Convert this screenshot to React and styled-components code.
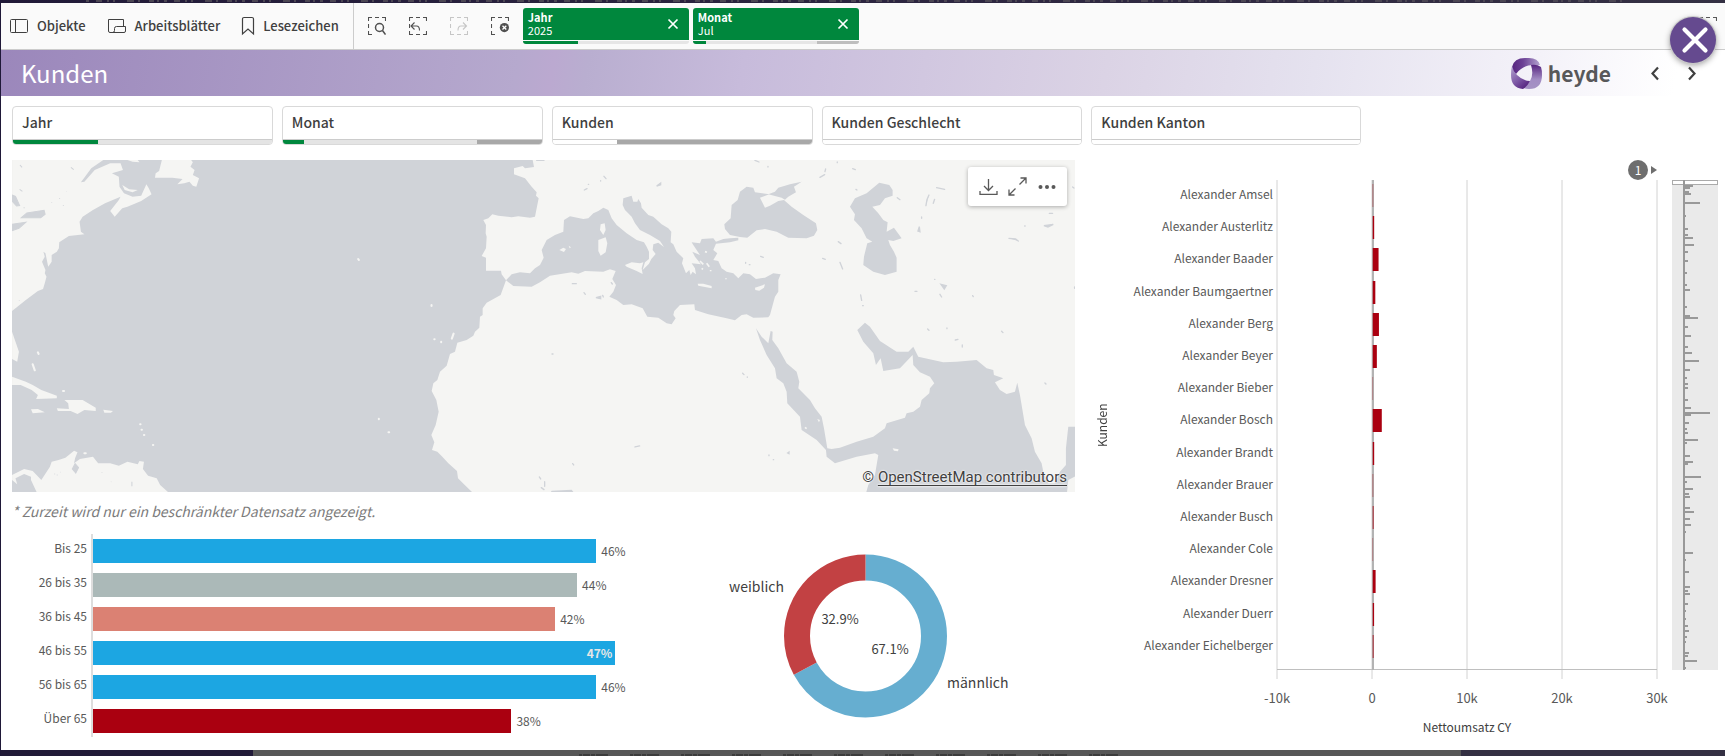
import React from 'react'
import styled, { createGlobalStyle } from 'styled-components'

const GlobalStyle = createGlobalStyle`
  * {
    box-sizing: border-box;
  }
  body {
    margin: 0;
    background: #fff;
    color: #404040;
    font-family: "Noto Sans CJK SC", "Open Sans", sans-serif;
    font-size: 13px;
    line-height: 16px;
  }
  button {
    font: inherit;
    color: inherit;
    background: none;
    border: 0;
    padding: 0;
    cursor: pointer;
  }
`

const Page = styled.div`
  position: relative;
  display: flex;
  flex-direction: column;
  min-height: 100vh;
  border-left: 1px solid #1f1838;
`

const TopEdge = styled.div`
  height: 3px;
  padding: 0 100px 0 85px;
  background: linear-gradient(90deg, #211a38, #2c2540 50%, #343043);
`

const BottomEdge = styled.div`
  display: grid;
  grid-template-columns: 252fr 1208fr 264fr;
  height: 6px;
  background: #343043;
`

const EdgePart = styled.div`
  display: flex;
  align-items: flex-end;
  justify-content: center;
  background: ${(props) => props.$color};
`

const EdgeMarks = styled.svg`
  display: block;
  width: ${(props) => props.$width};
  height: 3px;
`

const Toolbar = styled.div`
  display: flex;
  height: 47px;
  background: #fafafa;
  border-bottom: 1px solid #ccc;
`

const ToolbarMenu = styled.nav`
  display: flex;
  align-items: center;
  gap: 21px;
  padding: 0 14px 0 8px;
  border-right: 1px solid #ccc;
`

const MenuButton = styled.button`
  display: flex;
  align-items: center;
  gap: 8px;
  font-weight: 500;
`

const SelectionTools = styled.div`
  display: flex;
  align-items: center;
  gap: 23px;
  padding: 0 14px;
`

const IconButton = styled.button`
  display: flex;
  color: ${(props) => props.$color || '#505050'};
  opacity: ${(props) => (props.disabled ? 0.3 : 1)};
`

const Chips = styled.div`
  display: flex;
  gap: 4px;
  padding-top: 5px;
`

const Chip = styled.div`
  display: flex;
  flex-direction: column;
  width: 166px;
  height: 36px;
  border-radius: 3px;
  overflow: hidden;
`

const ChipBody = styled.div`
  display: flex;
  align-items: center;
  justify-content: space-between;
  height: 32px;
  padding: 0 10px 0 5px;
  margin-bottom: 1px;
  background: #00873d;
  color: #fff;
  font-size: 11px;
  line-height: 13px;
`

const ChipName = styled.div`
  font-weight: 700;
`

const StateBar = styled.div`
  display: flex;
  height: ${(props) => props.$height}px;
  background: ${(props) => props.$rest};
`

const StatePart = styled.div`
  width: ${(props) => props.$size}%;
  margin-left: ${(props) => (props.$end ? 'auto' : 0)};
  background: ${(props) => props.$color};
`

const SheetHeader = styled.header`
  display: flex;
  align-items: center;
  height: 46px;
  padding: 0 28px 0 20px;
  background: linear-gradient(
    100deg,
    #9b87bb 0%,
    #b6a9ce 30%,
    #bba9d0 32%,
    #b9aed0 34%,
    #c7bbdb 43%,
    #dbd3e5 64%,
    #e5e2ef 76%,
    #f4f2f9 89%,
    #ffffff 97%
  );
`

const SheetTitle = styled.h1`
  flex: 1;
  margin: 0;
  color: #fff;
  font-size: 24px;
  font-weight: 400;
  line-height: 30px;
`

const Logo = styled.div`
  display: flex;
  align-items: center;
  gap: 6px;
  margin-right: 39px;
  color: #58585a;
  font-size: 21px;
  font-weight: 700;
  line-height: 30px;
`

const PageButtons = styled.div`
  display: flex;
  gap: 27px;
`

const CloseButton = styled.button`
  position: absolute;
  top: 17px;
  right: 9px;
  display: flex;
  align-items: center;
  justify-content: center;
  width: 46px;
  height: 46px;
  padding-left: 4px;
  border-radius: 50%;
  background: #654a8f;
  color: #fff;
  box-shadow: 0 0 0 1px #c9c9c9, 0 2px 6px rgba(0, 0, 0, 0.4);
`

const FullscreenHint = styled.div`
  display: flex;
  margin: 14px 8px 0 auto;
  color: #595959;
`

const Sheet = styled.main`
  flex: 1;
  padding: 10px 7px 13px 11px;
`

const Filters = styled.div`
  display: grid;
  grid-template-columns: repeat(4, 261fr) 270fr 348fr;
  gap: 9px;
  margin-bottom: 15px;
`

const FilterBox = styled.button`
  height: 39px;
  border: 1px solid #d9d9d9;
  border-radius: 4px;
  overflow: hidden;
  background: #fff;
  text-align: left;
`

const FilterName = styled.div`
  height: 33px;
  padding: 0 9px;
  border-bottom: 1px solid #ccc;
  font-size: 14px;
  font-weight: 500;
  line-height: 31px;
`

const Columns = styled.div`
  display: grid;
  grid-template-columns: 1063fr 626fr;
  gap: 17px;
`

const MapBox = styled.section`
  position: relative;
  height: 332px;
  background: #d0d3d8;

  > svg {
    display: block;
    width: 100%;
    height: 100%;
  }
`

const MapTools = styled.div`
  position: absolute;
  top: 7px;
  right: 8px;
  display: flex;
  align-items: center;
  justify-content: space-around;
  width: 99px;
  height: 39px;
  padding: 0 6px;
  border-radius: 3px;
  background: #fff;
  box-shadow: 0 1px 4px rgba(0, 0, 0, 0.3);
`

const Attribution = styled.div`
  position: absolute;
  right: 8px;
  bottom: 5px;
  font-family: Roboto, sans-serif;
  font-size: 15px;
  line-height: 20px;
  text-shadow: 0 0 2px #fff, 0 0 2px #fff;

  a {
    color: inherit;
    text-underline-offset: 3px;
  }
`

const Note = styled.p`
  margin: 0 0 4px;
  color: #7b7b7b;
  font-size: 14px;
  font-style: italic;
  line-height: 38px;
`

const LowerCharts = styled.div`
  display: grid;
  grid-template-columns: 628fr 435fr;
`

const AgeChart = styled.section`
  display: grid;
  grid-template-columns: 79px 1fr;
  color: #595959;
`

const AgeLabels = styled.div`
  display: grid;
  gap: 10px;
  padding: 2px 4px 7px 0;
  font-size: 12px;
  text-align: right;
  line-height: 24px;
`

const AgeBars = styled.div`
  display: grid;
  gap: 10px;
  padding: 5px 0 4px;
  border-left: 2px solid #ddd;
`

const AgeRow = styled.div`
  display: flex;
  align-items: center;
  gap: 5px;
  height: 24px;
  font-size: 12px;
`

const AgeBar = styled.div`
  flex: none;
  width: ${(props) => props.$size}%;
  height: 24px;
  padding-right: 3px;
  background: ${(props) => props.$color};
  color: #e6e6e6;
  font-weight: 700;
  line-height: 24px;
  text-align: right;
`

const GenderChart = styled.svg`
  display: block;
  width: 100%;
  height: 203px;
  fill: #404040;
`

const CustomerChart = styled.section`
  display: grid;
  grid-template-columns: 20px 165px 1fr 61px;
  grid-template-rows: 20px 490px 67px;
  color: #595959;
`

const PageMark = styled.div`
  grid-column: 3;
  display: flex;
  align-items: center;
  justify-content: flex-end;
  gap: 3px;
`

const PageNumber = styled.div`
  width: 20px;
  height: 20px;
  border-radius: 50%;
  background: #6e6e6e;
  color: #fff;
  font-size: 12px;
  line-height: 20px;
  text-align: center;
`

const SideTitle = styled.div`
  grid-column: 1;
  grid-row: 2;
  writing-mode: vertical-rl;
  transform: rotate(180deg);
  color: #404040;
  font-size: 12px;
  line-height: 20px;
  text-align: center;
`

const CustomerNames = styled.div`
  grid-column: 2;
  grid-row: 2;
  display: grid;
  grid-auto-rows: 1fr;
  align-items: center;
  height: 483px;
  margin-top: -2px;
  padding-right: 4px;
  font-size: 12px;
  text-align: right;
  white-space: nowrap;
`

const Plot = styled.svg`
  grid-column: 3;
  grid-row: 2 / 4;
  width: 100%;
  height: 557px;
  overflow: visible;
  fill: #595959;
`

const MiniChart = styled.svg`
  grid-column: 4;
  grid-row: 2;
  width: 46px;
  height: 490px;
  margin-left: 15px;
`

const filters = [
  { name: 'Jahr', picked: 33, rest: '#e4e4e4', excluded: 0 },
  { name: 'Monat', picked: 8, rest: '#e4e4e4', excluded: 25 },
  { name: 'Kunden', picked: 0, rest: '#fff', excluded: 75 },
  { name: 'Kunden Geschlecht', picked: 0, rest: '#fff', excluded: 0 },
  { name: 'Kunden Kanton', picked: 0, rest: '#fff', excluded: 0 },
]

const chips = [
  { name: 'Jahr', value: '2025', picked: 33, excluded: 0 },
  { name: 'Monat', value: 'Jul', picked: 8, excluded: 25 },
]

const ages = [
  { label: 'Bis 25', value: '46%', size: 92, color: '#1ca6e2' },
  { label: '26 bis 35', value: '44%', size: 88.5, color: '#abb9b8' },
  { label: '36 bis 45', value: '42%', size: 84.5, color: '#db8173' },
  { label: '46 bis 55', value: '47%', size: 95.5, color: '#1ca6e2', inside: true },
  { label: '56 bis 65', value: '46%', size: 92, color: '#1ca6e2' },
  { label: 'Über 65', value: '38%', size: 76.5, color: '#aa0010' },
]

const customers = [
  { name: 'Alexander Amsel', value: 40 },
  { name: 'Alexander Austerlitz', value: 150 },
  { name: 'Alexander Baader', value: 610 },
  { name: 'Alexander Baumgaertner', value: 270 },
  { name: 'Alexander Berg', value: 650 },
  { name: 'Alexander Beyer', value: 430 },
  { name: 'Alexander Bieber', value: 30 },
  { name: 'Alexander Bosch', value: 950 },
  { name: 'Alexander Brandt', value: 150 },
  { name: 'Alexander Brauer', value: 40 },
  { name: 'Alexander Busch', value: 80 },
  { name: 'Alexander Cole', value: 30 },
  { name: 'Alexander Dresner', value: 300 },
  { name: 'Alexander Duerr', value: 140 },
  { name: 'Alexander Eichelberger', value: 80 },
]

const axis = ['-10k', '0', '10k', '20k', '30k']

// [y, length] of every bar in the overview
const overview = [
  [6, 8], [8, 5], [12, 4], [14, 6], [23, 15], [36, 1], [49, 3], [55, 3], [58, 8], [65, 9],
  [72, 3], [81, 3], [93, 2], [105, 2], [110, 5], [127, 2], [136, 5], [138, 13], [147, 3],
  [156, 6], [167, 3], [173, 7], [181, 14], [190, 5], [198, 2], [204, 3], [208, 3], [220, 3],
  [228, 6], [233, 25], [235, 6], [243, 4], [249, 2], [253, 3], [260, 13], [263, 2], [276, 5],
  [282, 8], [284, 3], [297, 16], [302, 2], [309, 8], [314, 4], [317, 5], [328, 5], [332, 9],
  [339, 5], [345, 6], [352, 1], [373, 8], [380, 1], [392, 4], [407, 5], [411, 3], [414, 5],
  [424, 3], [431, 1], [439, 1], [446, 3], [451, 4], [457, 2], [462, 1], [473, 4], [476, 3],
  [481, 12], [488, 1],
]

function PanelIcon() {
  return (
    <svg width="20" height="16" viewBox="0 0 20 16" fill="none" stroke="#404040">
      <rect x="1.5" y="1.5" width="17" height="13" rx="1" />
      <path d="M6.5 1.5v13" />
    </svg>
  )
}

function SheetsIcon() {
  return (
    <svg width="20" height="16" viewBox="0 0 20 16" fill="none" stroke="#404040">
      <path d="M7 14.500H3A1.500 1.500 0 0 1 1.500 13V1.500h15v7M5.500 14.500q2 0 2-2v-2q0-2 2-2h9v4.500a1.500 1.500 0 0 1-1.500 1.500H5.500" />
    </svg>
  )
}

function BookmarkIcon() {
  return (
    <svg width="14" height="20" viewBox="0 0 14 20" fill="none" stroke="#404040" strokeWidth="1.200">
      <path d="M1.500 18V3a1.500 1.500 0 0 1 1.500-1.500h8A1.500 1.500 0 0 1 12.500 3v15L7 13z" />
    </svg>
  )
}

function SelectionIcon({ kind }) {
  return (
    <svg width="18" height="18" viewBox="0 0 18 18" fill="none" stroke="currentColor" strokeWidth="1.100">
      <path d="M.5 4V.5H4M7 .5h4M14 .5h3.500V4M.5 7v4M.5 14v3.500H4" />
      {kind === 'search' && (
        <>
          <circle cx="11.500" cy="10.500" r="4" strokeWidth="1.500" />
          <path d="M14.500 13.500l3 4" strokeWidth="1.500" />
        </>
      )}
      {kind === 'back' && <path d="M7 17.500h4M14 17.500h3.500V14M5.500 5.500L2 9l3.500 3.500M2 9h5.500q3 0 3 4.500" />}
      {kind === 'forward' && <path d="M7 17.500h4M14 17.500h3.500V14M13 5.500L16.500 9 13 12.500M16.500 9H11q-3 0-3 4.500" />}
      {kind === 'clear' && (
        <>
          <circle cx="13.400" cy="10.600" r="4.600" fill="currentColor" stroke="none" />
          <path d="M11.500 8.700l3.800 3.800M15.300 8.700l-3.800 3.800" stroke="#fff" strokeWidth="1.300" />
        </>
      )}
    </svg>
  )
}

function CrossIcon({ size, width, cap }) {
  return (
    <svg width={size} height={size} viewBox="0 0 12 12" fill="none" stroke="currentColor" strokeWidth={width} strokeLinecap={cap}>
      <path d="M1.500 1.500l9 9M10.500 1.500l-9 9" />
    </svg>
  )
}

function ChevronIcon({ d }) {
  return (
    <svg width="10" height="16" viewBox="0 0 10 16" fill="none" stroke="#404040" strokeWidth="2.200">
      <path d={d} />
    </svg>
  )
}

function HeydeMark() {
  return (
    <svg width="31" height="31" viewBox="0 0 31 31">
      <defs>
        <linearGradient id="markTop" x1="0" x2="1">
          <stop offset="0" stopColor="#56247f" />
          <stop offset=".4" stopColor="#6d4296" />
          <stop offset="1" stopColor="#b3a3cf" />
        </linearGradient>
        <linearGradient id="markRight" x1="0" x2="0" y1="0" y2="1">
          <stop offset="0" stopColor="#56247f" />
          <stop offset=".6" stopColor="#a28cc3" />
          <stop offset="1" stopColor="#a592c4" />
        </linearGradient>
        <linearGradient id="markLeft" x1="0" x2=".7" y1="0" y2="1">
          <stop offset="0" stopColor="#b3a3cf" />
          <stop offset=".6" stopColor="#7d58a5" />
          <stop offset="1" stopColor="#56247f" />
        </linearGradient>
      </defs>
      <path d="M1 9Q3 0 14 0h4q9 0 11 7-3 0-7 0-7 0-12 4-3 2-5 5Q1 13 1 9z" fill="url(#markTop)" />
      <path d="M20 7q6-1 10 2 1 3 1 8 0 14-13 14-5 0-7-2 5-2 8-6 4-6 1-16z" fill="url(#markRight)" />
      <path d="M1 8q1 5 5 9 6 6 13 6-3 6-7 8Q0 30 0 17 0 11 1 8z" fill="url(#markLeft)" />
    </svg>
  )
}

function WorldMap() {
  return (
    <svg viewBox="0 0 1063 332" preserveAspectRatio="xMidYMid slice" fill="#f5f5f3">
      <g transform="translate(-12 -5) scale(.3444 .3333)">
        <path d="M35 15H300L265 40 235 82 245 80 275 45 320 25 350 25 357 45 325 55 345 65 347 95 360 115 385 125 410 122 425 88 432 100 440 118 410 138 370 155 355 160 333 185 320 168 345 135 350 125 305 145 270 165 240 185 231 200 235 230 245 238 200 243 172 262 171 280 165 290 150 300 150 320 140 335 132 295 126 290 130 305 122 320 132 345 130 355 135 365 130 385 125 402 110 408 75 435 35 468z" />
        <path d="M355 90L375 103 400 105 385 112 362 105zM370 15H400L405 22 385 20zM470 15H555L560 22 553 35 565 45 560 60 578 70 570 95 560 92 550 80 535 85 515 88 530 72 500 68 450 68 452 55 462 48z" />
        <path d="M35 530L45 560 55 590 50 620 35 612zM35 665L75 680 95 690 120 705 165 722 165 730 105 732 110 720 92 705 60 690 35 690zM187 735L240 735 278 758 278 768 245 765 225 777 205 768 168 768 165 760 200 762 198 745zM90 763L110 762 130 772 95 775zM300 764L328 768 322 773 303 773z" />
        <path d="M35 960L70 942 95 948 120 975 145 935 150 920 170 915 190 908 215 887 225 892 218 910 215 925 232 912 270 905 285 925 320 925 345 932 370 920 400 928 405 918 418 920 415 942 430 962 455 970 465 990 492 1015 108 1015 90 975 90 965 70 957 45 970 50 988 35 975z" />
        <g stroke="#f5f5f3" strokeWidth="6" strokeLinecap="round">
          <path d="M110 592l2 5M95 628l6 18M183 708h3M407 808h1M411 824h1M418 840h1M444 870h1M245 895h4M1040 312l2 3M1253 450v3M1261 553h1M1281 560v2M1317 536l-5 15M1100 791v2M1128 832h2" />
        </g>
        <g fill="#d0d3d8" stroke="#d0d3d8" strokeWidth="3">
          <path d="M62 188L78 174 128 166 131 178 118 188zM35 208L75 202 55 220 35 227zM35 120L45 124 57 152 48 153 35 138zM218 926l10 12-8 16-10-12z" />
          <path d="M58 30l6 7M206 37l8 7M57 103l8 6M70 157v3M173 130v2M184 150v2M193 108v1M150 142v1M158 957h2M165 960h2M175 952h1M322 980h1M383 980v14M296 952v1M56 436v1" />
        </g>
      </g>
      <g transform="translate(428 -5) scale(.3333)">
        <path d="M278 15L282 36 255 40 248 33 222 40 222 58 255 70 275 95 290 112 288 122 296 130 290 160 285 185 270 188 235 184 215 187 175 182 157 178 145 190 130 195 138 210 137 235 140 245 138 280 125 303 138 308 138 347 183 347 185 358 198 376 182 420 140 443 128 460 128 480 120 485 118 518 105 530 100 542 80 555 52 563 45 590 30 597 20 632 0 650 -8 675 -20 685 -25 708 -11 735 -4 770 -13 810 -26 840 -17 862 -24 885 -8 890 7 905 25 925 51 948 54 970 72 988 100 1015H1920V15z" />
        <g fill="#d0d3d8">
          <path d="M198 376L215 358 240 352 270 355 285 340 300 330 311 308 305 285 320 255 345 240 370 230 372 195 390 184 430 192 445 190 460 175 475 168 490 158 505 165 515 190 530 210 560 235 590 255 612 262 620 275 627 290 627 312 615 322 608 345 627 326 634 312 647 297 638 285 640 268 655 263 672 276 660 258 630 240 600 225 585 205 575 185 555 165 548 150 550 130 575 122 580 140 592 140 595 132 603 145 605 158 625 180 640 185 665 208 685 220 694 230 692 262 700 268 710 290 730 310 726 325 738 355 748 345 752 360 758 350 768 358 765 340 755 325 783 328 765 305 757 290 780 300 760 270 755 262 780 265 785 252 820 250 828 260 850 252 870 250 895 248 895 256 870 262 828 266 820 285 832 295 820 315 835 318 845 340 860 350 880 355 895 370 910 355 930 358 948 372 975 368 1000 355 1022 358 1015 375 1015 410 1005 425 990 480 985 487 940 488 920 478 905 480 885 496 860 490 805 478 765 465 763 448 720 450 703 468 700 480 707 490 695 508 680 505 655 488 622 485 608 460 575 448 550 450 530 435 508 425 520 410 528 390 517 372 527 348 510 343 490 350 435 348 415 356 395 352 330 362 300 382 275 395 220 393z" />
          <path d="M900 246L870 240 855 222 853 208 872 190 875 150 893 135 900 110 920 95 940 98 945 112 988 118 960 128 975 158 990 152 1015 138 1032 135 1055 155 1090 180 1128 205 1132 225 1122 242 1100 250 1045 248 1010 230 975 222 950 226 922 248z" />
          <path d="M985 118L1005 110 1015 98 1050 88 1085 80 1062 95 1068 112 1045 125 1035 134 1025 128z" />
          <path d="M1318 83L1348 90 1358 105 1358 122 1335 130 1320 150 1297 155 1315 175 1330 195 1343 202 1340 230 1362 218 1385 250 1360 258 1345 255 1350 270 1362 290 1370 308 1370 350 1335 360 1300 350 1270 330 1272 305 1282 265 1297 260 1280 250 1265 220 1242 195 1245 178 1230 155 1245 130 1280 115z" />
          <path d="M948 520L965 545 985 565 992 528 998 530 997 555 1015 580 1040 625 1070 650 1078 680 1075 700 1110 735 1125 760 1145 785 1152 820 1162 880 1175 882 1200 878 1250 860 1300 845 1335 820 1340 805 1395 788 1400 775 1420 770 1440 755 1445 735 1468 715 1470 700 1483 685 1470 665 1440 652 1420 630 1418 600 1380 640 1330 648 1322 610 1308 630 1300 595 1270 560 1252 525 1275 503 1290 515 1320 558 1370 590 1405 590 1420 575 1435 605 1510 622 1550 620 1610 615 1640 640 1660 645 1662 660 1690 670 1665 682 1680 705 1700 717 1725 710 1732 683 1740 720 1755 810 1775 850 1785 890 1805 925 1810 950 1825 985 1845 985 1860 950 1878 930 1878 880 1885 815H1910V962L1885 975 1881 1015H1278L1285 990 1305 960 1315 900 1305 895 1250 905 1185 925 1160 905 1158 885 1130 855 1085 825 1080 785 1042 745 1040 710 1030 685 1010 670 1005 640 980 600 960 555z" />
          <path d="M330 1015l5-8 60-3 8 11z" />
        </g>
        <path d="M482 208L494 205 497 225 490 240 480 225zM475 255L497 247 502 265 497 292 482 302 475 288zM358 285L370 278 378 282 372 291zM386 272l7 5-4 3zM555 330L575 322 600 325 610 322 605 340 608 357 590 348 560 335zM773 386L790 386 815 393 815 400 775 392zM945 398L975 388 972 398 958 407 946 405zM1358 880l18 3-2 6-12-2zM1132 792l8 3-3 7z" />
        <path d="M795 290l6 2M800 325l8 10M780 318l10 10M812 345v4M832 300l3 12M826 280l3 6M858 370v3M785 340l4 3M1095 817l5 4" stroke="#f5f5f3" strokeWidth="5" />
        <g fill="#d0d3d8" stroke="#d0d3d8" strokeWidth="4" strokeLinecap="round">
          <path d="M650 93l12-9v5zM433 105l8-4M445 88h1M492 64l6 7M482 77v1M397 386h12M432 413l4 5M468 428l14-4v7zM488 421l2 5M514 383l3 4M336 597h3M585 876l14-3M398 926l3 4M298 966l4 6M314 980v14M304 998l8 6M962 304l8 3M917 322v3M928 329h2M945 16l12 5M984 34v2M908 655l4 4M922 666v1M987 900v2M1000 914h1M290 16h22" />
          <path d="M1140 67l14-8M1155 50l2-8M1192 21v2M1238 41l8 3M1248 103l3 2M1148 310l8 3M1200 322l8 20M1195 260l8 6M1262 420l3 16M1268 452h2M1425 409h6M1372 128l8 6M1458 152l3-18 6-14M1480 145l4-12M1490 98l24 5M1445 186v4M1438 215l2 15-6-2zM1484 373h1M1503 388l16 4-6 10zM1500 418l5 8M1598 422l2 3M1463 522l4 4M1521 519v2M1546 555l8-2M1567 570v6M1685 529l4 4M1815 684l3 3M1755 212v2M1707 250l20 2 8 6M1812 212l28-4-16 8zM1828 175h10M1898 96l4 3M1904 396v4M1043 894l4-3v5z" />
        </g>
      </g>
    </svg>
  )
}

function DownloadIcon() {
  return (
    <svg width="19" height="18" viewBox="0 0 19 18" fill="none" stroke="#595959" strokeWidth="1.300">
      <path d="M9.500 1v11M5 8l4.500 4.500L14 8M1 13v3.400h17V13" />
    </svg>
  )
}

function ExpandIcon() {
  return (
    <svg width="19" height="19" viewBox="0 0 19 19" fill="none" stroke="#595959" strokeWidth="1.300">
      <path d="M11.500 7.500l6-6M12.500 1h5.500v5.500M7.500 11.500l-6 6M1 12.500V18h5.500" />
    </svg>
  )
}

function MoreIcon() {
  return (
    <svg width="18" height="4" viewBox="0 0 18 4" fill="#595959">
      <circle cx="2.500" cy="2" r="2" />
      <circle cx="9" cy="2" r="2" />
      <circle cx="15.500" cy="2" r="2" />
    </svg>
  )
}

export default function App() {
  return (
    <Page>
      <GlobalStyle />
      <TopEdge>
        <EdgeMarks $width="100%">
          <line x1="0" x2="100%" y1="1" y2="1" stroke="#4b4653" strokeWidth="2" strokeDasharray="3 7 6 5 2 4 2 12 7 4 2 9 5 3 2 5" />
        </EdgeMarks>
      </TopEdge>
      <Toolbar>
        <ToolbarMenu>
          <MenuButton><PanelIcon />Objekte</MenuButton>
          <MenuButton><SheetsIcon />Arbeitsblätter</MenuButton>
          <MenuButton><BookmarkIcon />Lesezeichen</MenuButton>
        </ToolbarMenu>
        <SelectionTools>
          <IconButton aria-label="Suchen"><SelectionIcon kind="search" /></IconButton>
          <IconButton aria-label="Zurück"><SelectionIcon kind="back" /></IconButton>
          <IconButton aria-label="Vorwärts" disabled><SelectionIcon kind="forward" /></IconButton>
          <IconButton aria-label="Auswahl löschen"><SelectionIcon kind="clear" /></IconButton>
        </SelectionTools>
        <Chips>
          {chips.map((chip) => (
            <Chip key={chip.name}>
              <ChipBody>
                <div>
                  <ChipName>{chip.name}</ChipName>
                  <div>{chip.value}</div>
                </div>
                <IconButton $color="#fff" aria-label={`${chip.name} entfernen`}>
                  <CrossIcon size="12" width="1.700" />
                </IconButton>
              </ChipBody>
              <StateBar $height={3} $rest="#e6e6e6">
                <StatePart $size={chip.picked} $color="#00873d" />
                <StatePart $size={chip.excluded} $color="#bebebe" $end />
              </StateBar>
            </Chip>
          ))}
        </Chips>
        <FullscreenHint><SelectionIcon /></FullscreenHint>
      </Toolbar>

      <SheetHeader>
        <SheetTitle>Kunden</SheetTitle>
        <Logo><HeydeMark />heyde</Logo>
        <PageButtons>
          <IconButton aria-label="Vorheriges Blatt"><ChevronIcon d="M8 2.500L2.500 8.500 8 14.500" /></IconButton>
          <IconButton aria-label="Nächstes Blatt"><ChevronIcon d="M2 2.500L7.500 8.500 2 14.500" /></IconButton>
        </PageButtons>
      </SheetHeader>

      <Sheet>
        <Filters>
          {filters.map((filter) => (
            <FilterBox key={filter.name}>
              <FilterName>{filter.name}</FilterName>
              <StateBar $height={4} $rest={filter.rest}>
                <StatePart $size={filter.picked} $color="#00873d" />
                <StatePart $size={filter.excluded} $color="#a8a8a8" $end />
              </StateBar>
            </FilterBox>
          ))}
        </Filters>

        <Columns>
          <div>
            <MapBox>
              <WorldMap />
              <MapTools>
                <IconButton aria-label="Herunterladen"><DownloadIcon /></IconButton>
                <IconButton aria-label="Vollbild"><ExpandIcon /></IconButton>
                <IconButton aria-label="Mehr"><MoreIcon /></IconButton>
              </MapTools>
              <Attribution>
                © <a href="#osm">OpenStreetMap contributors</a>
              </Attribution>
            </MapBox>
            <Note>* Zurzeit wird nur ein beschränkter Datensatz angezeigt.</Note>
            <LowerCharts>
              <AgeChart>
                <AgeLabels>
                  {ages.map((age) => <div key={age.label}>{age.label}</div>)}
                </AgeLabels>
                <AgeBars>
                  {ages.map((age) => (
                    <AgeRow key={age.label}>
                      <AgeBar $size={age.size} $color={age.color}>{age.inside && age.value}</AgeBar>
                      {!age.inside && age.value}
                    </AgeRow>
                  ))}
                </AgeBars>
              </AgeChart>
              <GenderChart viewBox="0 0 435 203">
                <g fill="none" strokeWidth="26" transform="rotate(-90 225.500 102)">
                  <circle cx="225.500" cy="102" r="68.500" stroke="#66aed0" pathLength="1000" strokeDasharray="671 329" />
                  <circle cx="225.500" cy="102" r="68.500" stroke="#c24143" pathLength="1000" strokeDasharray="329 671" strokeDashoffset="-671" />
                </g>
                <g fontSize="14">
                  <text x="144" y="58" textAnchor="end">weiblich</text>
                  <text x="307" y="154">männlich</text>
                </g>
                <g fontSize="13" textAnchor="middle">
                  <text x="200" y="90">32.9%</text>
                  <text x="250" y="120">67.1%</text>
                </g>
              </GenderChart>
            </LowerCharts>
          </div>

          <CustomerChart>
            <PageMark>
              <PageNumber>1</PageNumber>
              <svg width="6" height="8" viewBox="0 0 6 8" fill="#6e6e6e">
                <path d="M0 0l6 4-6 4z" />
              </svg>
            </PageMark>
            <SideTitle>Kunden</SideTitle>
            <CustomerNames>
              {customers.map((customer) => <div key={customer.name}>{customer.name}</div>)}
            </CustomerNames>
            <Plot>
              <g stroke="#d2d2d2" strokeWidth="1">
                {axis.map((label, i) => (
                  <line key={label} x1={`${i * 25}%`} x2={`${i * 25}%`} y1="0" y2="499" />
                ))}
                <line x1="0" x2="100%" y1="489.500" y2="489.500" stroke="#bfbfbf" />
              </g>
              <rect x="25%" width="2" height="490" fill="#b3b3b3" />
              {customers.map((customer, i) => (
                <rect
                  key={customer.name}
                  x="25.200%"
                  y={4 + Math.round(i * 32.2)}
                  width={`${customer.value / 400}%`}
                  height="23"
                  fill="#aa0010"
                />
              ))}
              {axis.map((label, i) => (
                <text key={label} x={`${i * 25}%`} y="523" fontSize="13" textAnchor="middle">{label}</text>
              ))}
              <text x="50%" y="552" fontSize="12" textAnchor="middle" fill="#404040">Nettoumsatz CY</text>
            </Plot>
            <MiniChart viewBox="0 0 46 490" fill="#999">
              <rect width="46" height="490" fill="#eaeaea" />
              <rect x=".500" y=".500" width="45" height="4" fill="#fff" stroke="#aaa" />
              <rect x="11" width="2" height="490" />
              {overview.map(([y, length]) => (
                <rect key={y} x="13" y={y - 1} width={length} height="2" />
              ))}
            </MiniChart>
          </CustomerChart>
        </Columns>
      </Sheet>

      <BottomEdge>
        <EdgePart $color="#211a38" />
        <EdgePart $color="#575757">
          <EdgeMarks $width="46%">
            <line x1="0" x2="100%" y1="2" y2="2" stroke="#3c3c3c" strokeWidth="2" strokeDasharray="3 1 7 1 4 1 12 22" />
          </EdgeMarks>
        </EdgePart>
        <EdgePart $color="#343043" />
      </BottomEdge>
      <CloseButton aria-label="Schließen"><CrossIcon size="28" width="1.800" cap="round" /></CloseButton>
    </Page>
  )
}
